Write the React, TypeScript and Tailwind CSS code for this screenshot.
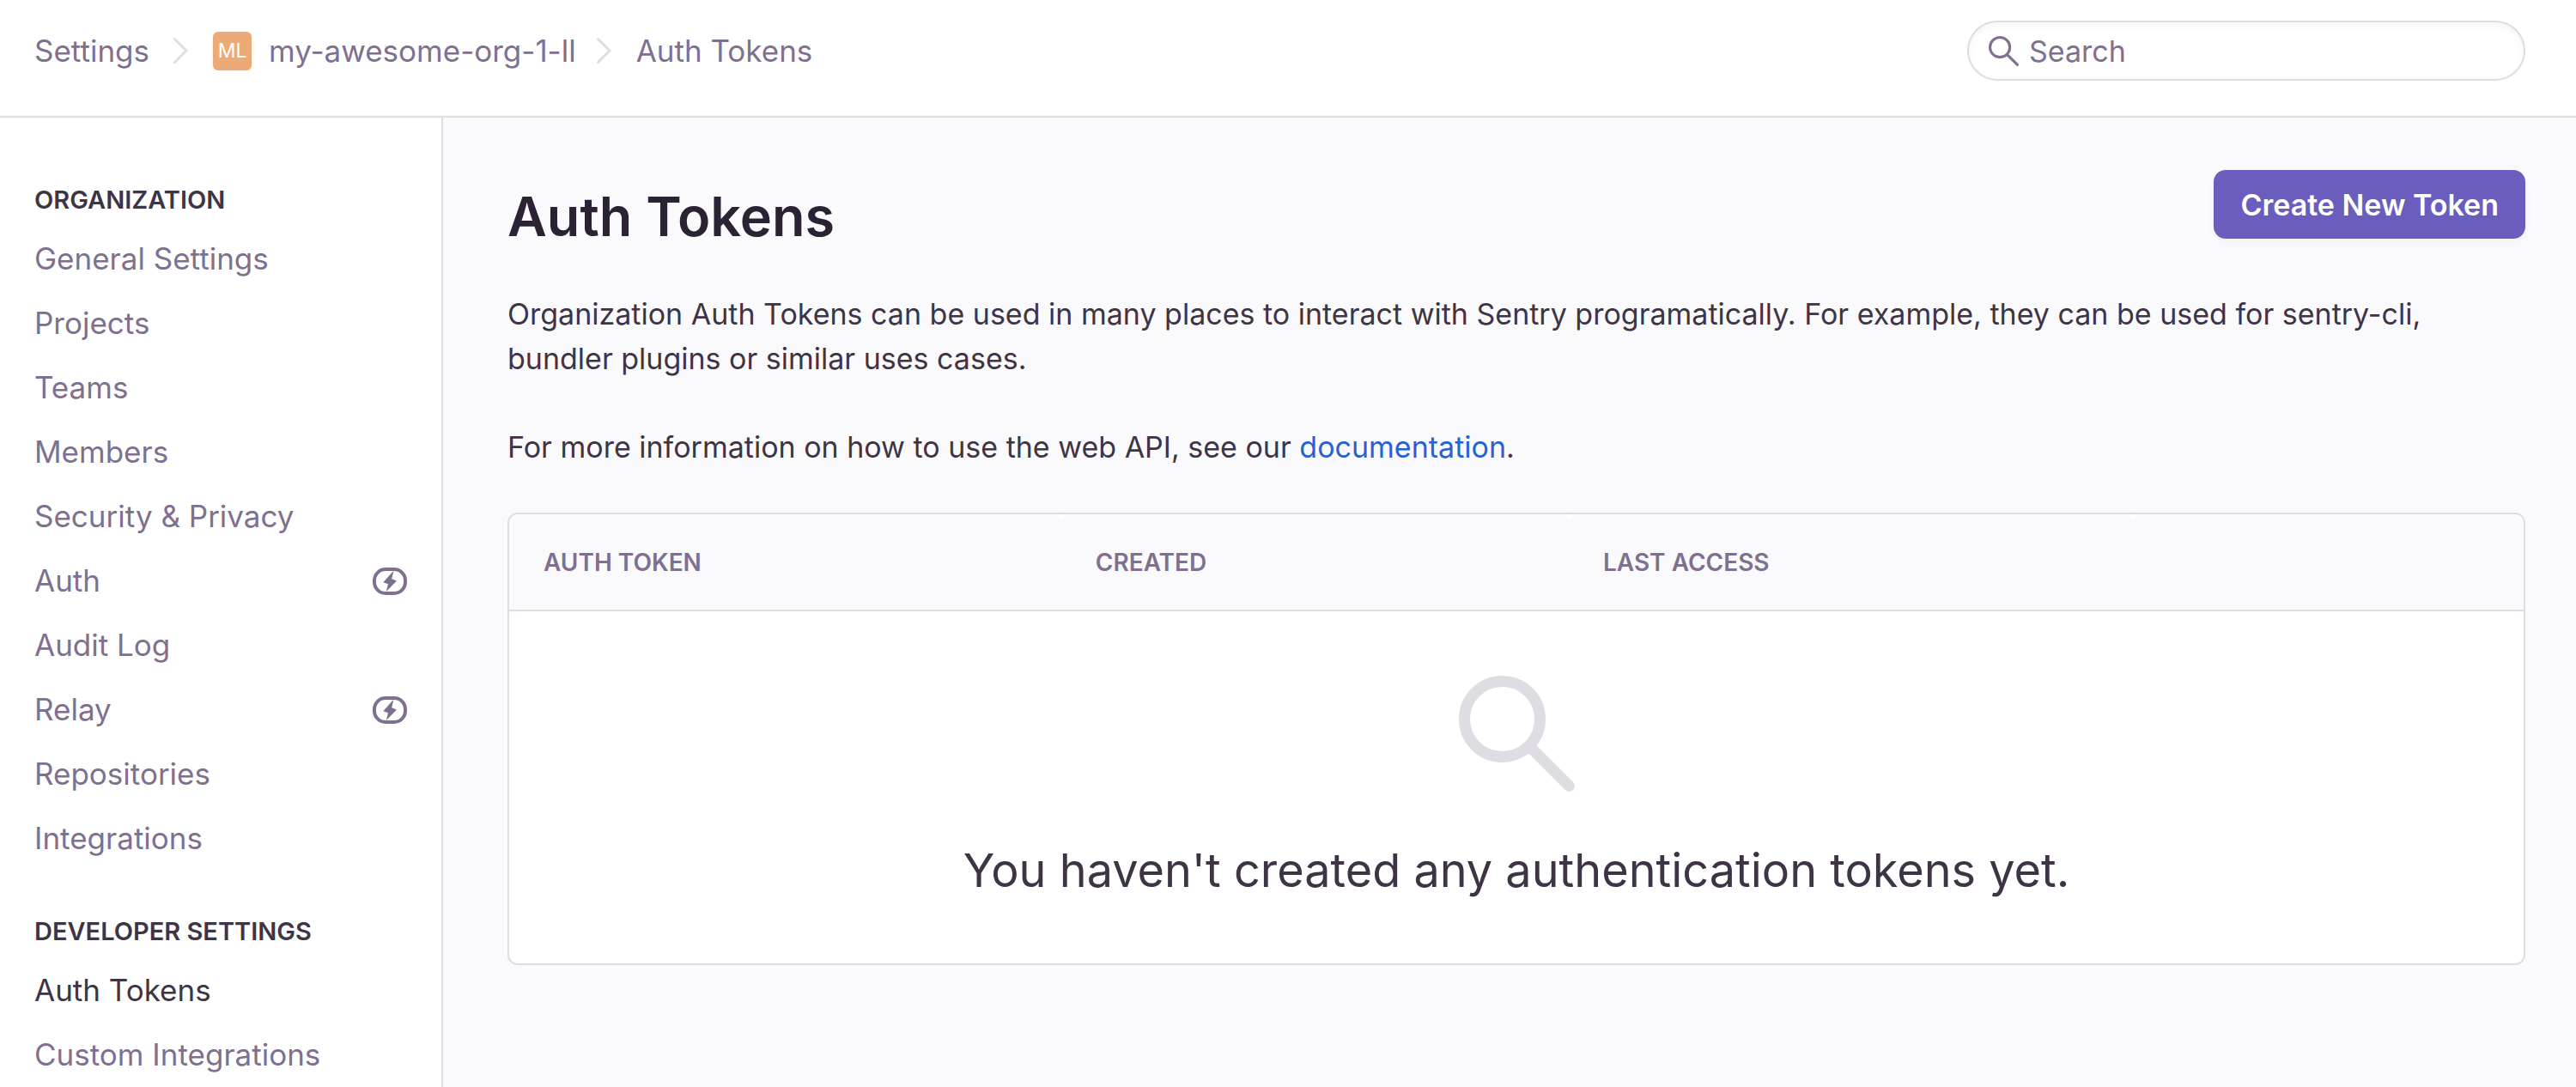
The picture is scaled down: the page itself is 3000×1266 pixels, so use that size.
type NavItem = { label: string; active?: boolean; upsell?: boolean };
type NavSection = { title: string; items: NavItem[] };

const sections: NavSection[] = [
  {
    title: 'Organization',
    items: [
      { label: 'General Settings' },
      { label: 'Projects' },
      { label: 'Teams' },
      { label: 'Members' },
      { label: 'Security & Privacy' },
      { label: 'Auth', upsell: true },
      { label: 'Audit Log' },
      { label: 'Relay', upsell: true },
      { label: 'Repositories' },
      { label: 'Integrations' },
    ],
  },
  {
    title: 'Developer Settings',
    items: [{ label: 'Auth Tokens', active: true }, { label: 'Custom Integrations' }],
  },
];

function Chevron() {
  return (
    <svg viewBox="0 0 17 30" className="h-[30px] w-[17px] shrink-0" fill="none" stroke="#dfdce4" strokeWidth="3" strokeLinecap="round" strokeLinejoin="round" aria-hidden="true">
      <path d="M1.5 1.5 15 15 1.5 28.5" />
    </svg>
  );
}

function SearchIcon({ className, strokeWidth }: { className: string; strokeWidth: number }) {
  const inset = strokeWidth / 2;
  return (
    <svg viewBox="0 0 135 135" className={className} fill="none" stroke="currentColor" strokeWidth={strokeWidth} strokeLinecap="round" aria-hidden="true">
      <circle cx="50.5" cy="50.5" r={50.5 - inset} />
      <path d={`M86 86 ${135 - inset} ${135 - inset}`} />
    </svg>
  );
}

function UpsellIcon() {
  return (
    <svg viewBox="0 0 40 32" className="h-8 w-10 shrink-0" role="img" aria-label="Upgrade required">
      <rect x="2" y="2" width="36" height="28" rx="13" fill="none" stroke="currentColor" strokeWidth="4" />
      <path d="M24.500 3.500 12.300 17.300 18 19.200 15.800 28 28 15.400 22.200 13.300Z" fill="currentColor" />
    </svg>
  );
}

function Header() {
  return (
    <header className="flex items-start justify-between border-b-2 border-[#dfdce4] bg-white pt-6 pr-[59px] pb-[41px] pl-10">
      <nav aria-label="Breadcrumb" className="flex h-[70px] items-center text-[35px] text-[#80708f]">
        <a href="#settings">Settings</a>
        <span className="mr-[29px] ml-[28px] flex"><Chevron /></span>
        <a href="#org" className="flex items-center gap-5">
          <span className="flex size-[45px] items-center justify-center rounded-md bg-[#eda976] text-[23px] text-white">ML</span>
          my-awesome-org-1-ll
        </a>
        <span className="mr-[29px] ml-[24px] flex"><Chevron /></span>
        <a href="#auth-tokens">Auth Tokens</a>
      </nav>
      <label className="flex h-[70px] w-[650px] items-center gap-3 rounded-full border-2 border-[#dfdce4] bg-white pl-[23px] text-[#80708f] shadow-[inset_0_4px_8px_rgba(43,34,51,0.04)]">
        <SearchIcon className="size-[35px] shrink-0" strokeWidth={12} />
        <input type="text" aria-label="Search" placeholder="Search" className="w-full min-w-0 bg-transparent pr-8 text-[34px] outline-none placeholder:text-[#80708f]" />
      </label>
    </header>
  );
}

function Sidebar() {
  return (
    <aside className="flex w-[516px] shrink-0 flex-col gap-[49px] border-r-2 border-[#dfdce4] bg-white pt-[74px] pr-10 pl-10">
      {sections.map((section) => (
        <nav key={section.title} aria-label={section.title}>
          <h2 className="mb-[9px] text-[29px] leading-[44px] font-semibold text-[#3e3446] uppercase">{section.title}</h2>
          <ul>
            {section.items.map((item) => (
              <li key={item.label}>
                <a
                  href={`#${item.label}`}
                  aria-current={item.active ? 'page' : undefined}
                  className={`flex h-[75px] items-center justify-between text-[35px] ${item.active ? 'text-[#3e3446]' : 'text-[#80708f]'}`}
                >
                  {item.label}
                  {item.upsell && <UpsellIcon />}
                </a>
              </li>
            ))}
          </ul>
        </nav>
      ))}
    </aside>
  );
}

function TokenTable() {
  const head = 'h-[113px] rounded-t-lg border-b-2 border-[#dfdce4] bg-[#fafafc] pl-10 text-left font-semibold';
  return (
    <div className="mt-[50px] overflow-hidden rounded-xl border-2 border-[#dfdce4] bg-white">
      <table className="w-full table-fixed border-separate border-spacing-0">
        <thead className="text-[28px] text-[#80708f] uppercase">
          <tr>
            <th scope="col" className={`${head} w-[27.4%]`}>Auth Token</th>
            <th scope="col" className={`${head} w-[25.2%]`}>Created</th>
            <th scope="col" className={`${head} w-[28%]`}>Last access</th>
            <td className={head} />
          </tr>
        </thead>
        <tbody>
          <tr>
            <td colSpan={4} className="px-10 pt-[75px] pb-[68px]">
              <div className="flex flex-col items-center gap-[52px] text-center">
                <SearchIcon className="size-[135px] text-[#dfdce4]" strokeWidth={13} />
                <p className="text-[54px] leading-[80px] text-[#3e3446]">You haven't created any authentication tokens yet.</p>
              </div>
            </td>
          </tr>
        </tbody>
      </table>
    </div>
  );
}

export default function App() {
  return (
    <div className="flex h-screen flex-col overflow-hidden bg-[#fafafc] font-['Inter',sans-serif] text-[#3e3446]">
      <Header />
      <div className="flex min-h-0 grow">
        <Sidebar />
        <main className="min-w-0 grow pt-[61px] pr-[59px] pl-[75px]">
          <div className="mb-[48px] flex items-start justify-between">
            <h1 className="pt-[14px] text-[63px] leading-[80px] font-semibold text-[#2b2233]">Auth Tokens</h1>
            <button type="button" className="h-20 rounded-[14px] bg-[#6a5dbe] px-[31px] text-[34px] font-semibold text-white shadow-[0_4px_8px_rgba(43,34,51,0.04)]">
              Create New Token
            </button>
          </div>
          <div className="flex flex-col gap-[51px] text-[34px] leading-[52px]">
            <p>
              Organization Auth Tokens can be used in many places to interact with Sentry programatically. For example, they can be used for sentry-cli, bundler plugins or similar uses cases.
            </p>
            <p>
              For more information on how to use the web API, see our <a href="#documentation" className="text-[#2562d4]">documentation</a>.
            </p>
          </div>
          <TokenTable />
        </main>
      </div>
    </div>
  );
}
